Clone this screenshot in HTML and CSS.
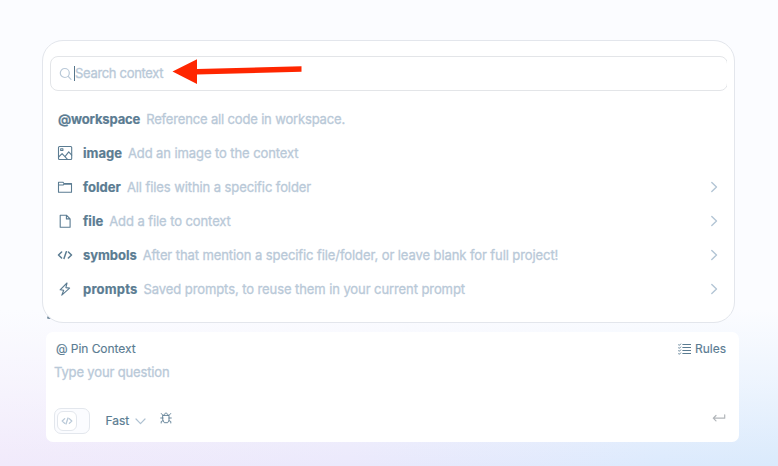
FILE: index.html
```
<!DOCTYPE html>
<html lang="en">
<head>
<meta charset="utf-8">
<title>Context picker</title>
<link rel="stylesheet" href="styles.css">
</head>
<body>
<section class="picker">
  <div class="search-clip">
    <div class="search">
      <svg class="search-icon" viewBox="0 0 14 14"><circle cx="5.8" cy="6" r="4.5"/><path d="M9.2 9.4l2.8 2.9"/></svg>
      <span class="caret"></span><span class="search-text">Search context</span>
    </div>
  </div>
  <ul class="options">
    <li><b class="name-workspace">@workspace</b><span class="d-workspace">Reference all code in workspace.</span></li>
    <li><svg class="icon" viewBox="0 0 16 16"><rect x="1.5" y="1.5" width="13.2" height="13" rx="1"/><rect x="3.7" y="3.7" width="2.2" height="1.8"/><path d="M1.6 12l3.5-3.4 5.4 5.8M8.2 11.3l3.5-4.5 3 3.4"/></svg><b>image</b><span>Add an image to the context</span></li>
    <li><svg class="icon" viewBox="0 0 16 16"><path d="M1.5 13.3V3.2h4.4l1 1.3h7.6v8.8zM1.5 6h4.8l.8-1.3M7 5.2h7.5"/></svg><b class="name-folder">folder</b><span>All files within a specific folder</span><svg class="chevron" viewBox="0 0 8 12"><path d="M1.8 1.5L6.500 6l-4.700 4.500"/></svg></li>
    <li><svg class="icon" viewBox="0 0 16 16"><path d="M3.2 2.2h6.2l3.7 3.7v8.4H3.2zM9.4 2.4v3.5H13"/></svg><b class="name-file">file</b><span>Add a file to context</span><svg class="chevron" viewBox="0 0 8 12"><path d="M1.8 1.5L6.500 6l-4.700 4.500"/></svg></li>
    <li><svg class="icon bold" viewBox="0 0 16 16"><path d="M4.6 5L1.5 8l3.1 3M11.4 5l3.1 3-3.1 3M9.3 4.8L7 11.4"/></svg><b class="name-symbols">symbols</b><span>After that mention a specific file/folder, or leave blank for full project!</span><svg class="chevron" viewBox="0 0 8 12"><path d="M1.8 1.5L6.500 6l-4.700 4.500"/></svg></li>
    <li><svg class="icon" viewBox="0 0 16 16"><path d="M10 2L3.1 8.8l3.6.5-1.9 4.9 7.8-7.1-3.7-.5z"/></svg><b class="name-prompts">prompts</b><span>Saved prompts, to reuse them in your current prompt</span><svg class="chevron" viewBox="0 0 8 12"><path d="M1.8 1.5L6.500 6l-4.700 4.500"/></svg></li>
  </ul>
  <svg class="arrow" viewBox="0 0 130 26"><path d="M.5 12.6L25 .2v9.9L129.5 7.3v5.4L25 15.6v9.3z"/></svg>
  <i class="edge-mark"></i>
</section>
<section class="composer">
  <header><span class="pin">@ Pin Context</span><span class="rules"><svg viewBox="0 0 13 12"><path d="M4.4 1.5H13M4.4 4.5H13M4.4 7.5H13M4.4 10.5H13"/><path d="M.4 1.6l.9.8L2.9.7M.4 4.6l.9.8 1.6-1.7M.4 7.5l.9.8 1.6-1.7M.4 10.5l.9.8 1.6-1.7"/></svg>Rules</span></header>
  <p class="question">Type your question</p>
  <footer>
    <span class="toggle"><span class="knob"><svg viewBox="0 0 12 10"><path d="M3.7 2.6L1.2 5l2.5 2.4M8.3 2.6L10.8 5 8.3 7.4M7 2L5 8"/></svg></span></span>
    <span class="mode">Fast</span>
    <svg class="down" viewBox="0 0 11 7"><path d="M1 1l4.5 4.700L10 1"/></svg>
    <svg class="bug" viewBox="0 0 12 12"><path d="M3 3.4h6v5L7.7 10.7H4.3L3 8.4zM4 3.3C4 .3 8 .3 8 3.3M.7 6H3M9 6h2.3M1.3 1.5L3 3.4M10.7 1.5L9 3.4M1.2 11V9.5L3 8.7M10.8 11V9.5L9 8.7"/></svg>
    <svg class="enter" viewBox="0 0 14 8"><path d="M12.7.8v3.4H1.3M4 1.5L1.3 4.2 4 6.9"/></svg>
  </footer>
</section>
</body>
</html>
```
FILE: styles.css
```
* { box-sizing: border-box; }
body {
  margin: 0;
  height: 466px;
  padding: 40px 39px 0 42px;
  overflow: hidden;
  font: 13px/18px Inter, "Liberation Sans", sans-serif;
  color: #5b7c92;
  background:
    linear-gradient(to bottom, #fbfcff 0, #fbfcff 310px, rgba(251,252,255,.6) 380px, rgba(251,252,255,0) 466px),
    linear-gradient(to right, #f1eafb 0, #ebe9fc 45%, #dceafd 85%, #daeafc 100%);
}
svg { display: block; flex: none; fill: none; stroke: currentColor; stroke-linecap: round; stroke-linejoin: round; }
.picker {
  position: relative;
  width: 693px;
  height: 283px;
  padding: 15px 7px 0;
  border: 1px solid #e3e6ec;
  border-radius: 21px;
  background: #fff;
}
.search-clip { width: 677px; overflow: hidden; }
.search {
  display: flex;
  align-items: center;
  width: 678px;
  height: 35px;
  padding-left: 8px;
  border: 1px solid #e3e5e8;
  border-radius: 8px;
  color: #b9c9d8;
}
.search-icon { width: 14px; height: 14px; stroke-width: 1.2; }
.caret { width: 1px; height: 15px; margin-left: 1px; background: #55768c; }
.search-text { padding-bottom: 2px; letter-spacing: -.32px; -webkit-text-stroke: .3px; }
.options { margin: 11px 0 0; padding: 0 2px 0 8px; list-style: none; }
.options li { display: flex; align-items: center; height: 34px; white-space: nowrap; }
.options b { font-weight: 700; margin-right: 6px; -webkit-text-stroke: .2px; }
.options span { color: #b9c9d8; letter-spacing: -.085px; -webkit-text-stroke: .3px; }
.options .d-workspace { letter-spacing: -.16px; }
.name-workspace { letter-spacing: -.15px; }
.name-folder, .name-file { letter-spacing: .04px; }
.name-symbols { letter-spacing: -.04px; }
.name-prompts { letter-spacing: .2px; }
.icon { width: 16px; height: 16px; margin: 0 9px 0 -1px; stroke-width: 1.1; }
.icon + b { margin-left: 1px; }
.bold { stroke-width: 1.5; }
.chevron { width: 8px; height: 12px; margin-left: auto; margin-right: 7px; color: #b3c5d5; stroke-width: 1.4; }
.arrow { position: absolute; left: 129px; top: 18px; width: 130px; height: 26px; fill: #ff2600; stroke: none; }
.edge-mark { position: absolute; z-index: -1; left: 4px; top: 275px; width: 4px; height: 3px; border-radius: 2px; background: #7f95a6; }
.composer {
  width: 693px;
  height: 110px;
  margin: 9px 0 0 4px;
  padding: 8px 13px 0 8px;
  border-radius: 7px;
  background: #fff;
}
.composer header { display: flex; justify-content: space-between; padding-left: 2px; font-size: 12px; -webkit-text-stroke: .15px; }
.pin { letter-spacing: -.06px; }
.rules { display: flex; align-items: center; gap: 4px; }
.rules svg { width: 13px; height: 12px; stroke-width: 1; stroke-linecap: butt; }
.question { margin: 5px 0 0; color: #b9c9d8; letter-spacing: -.15px; -webkit-text-stroke: .3px; }
.composer footer { display: flex; align-items: center; margin-top: 27px; height: 26px; }
.toggle { width: 36px; height: 26px; padding: 2px; border: 1px solid #e3e7ed; border-radius: 7px; background: #fbfcff; }
.knob { display: flex; align-items: center; justify-content: center; width: 20px; height: 20px; border: 1px solid #e3e7ed; border-radius: 6px; background: #fff; }
.knob svg { width: 12px; height: 10px; color: #b9c9d8; stroke-width: 1.3; }
.mode { margin-left: 15.500px; font-size: 12px; -webkit-text-stroke: .2px; }
.down { width: 11px; height: 7px; margin-left: 5.500px; color: #afc2d2; stroke-width: 1.2; }
.bug { width: 12px; height: 12px; margin: -7px 0 0 14.500px; stroke-width: .9; }
.enter { width: 14px; height: 8px; margin: -7px 0 0 auto; color: #b2b6ba; stroke-width: 1.2; }
```
